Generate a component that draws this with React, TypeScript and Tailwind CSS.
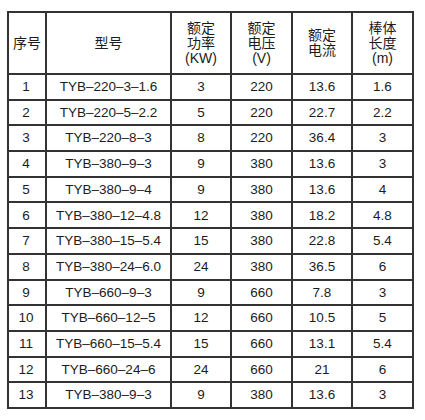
const rows = [
  ["1", "TYB–220–3–1.6", "3", "220", "13.6", "1.6"],
  ["2", "TYB–220–5–2.2", "5", "220", "22.7", "2.2"],
  ["3", "TYB–220–8–3", "8", "220", "36.4", "3"],
  ["4", "TYB–380–9–3", "9", "380", "13.6", "3"],
  ["5", "TYB–380–9–4", "9", "380", "13.6", "4"],
  ["6", "TYB–380–12–4.8", "12", "380", "18.2", "4.8"],
  ["7", "TYB–380–15–5.4", "15", "380", "22.8", "5.4"],
  ["8", "TYB–380–24–6.0", "24", "380", "36.5", "6"],
  ["9", "TYB–660–9–3", "9", "660", "7.8", "3"],
  ["10", "TYB–660–12–5", "12", "660", "10.5", "5"],
  ["11", "TYB–660–15–5.4", "15", "660", "13.1", "5.4"],
  ["12", "TYB–660–24–6", "24", "660", "21", "6"],
  ["13", "TYB–380–9–3", "9", "380", "13.6", "3"],
];

const headers = [
  ["序号"],
  ["型号"],
  ["额定", "功率", "(KW)"],
  ["额定", "电压", "(V)"],
  ["额定", "电流"],
  ["棒体", "长度", "(m)"],
];

export default function App() {
  return (
    <div className="w-[425px] h-[420px] bg-white pl-[7px] pt-[11px]">
      <table className="border-collapse w-[405px] table-fixed text-[13.5px] text-[#1c1c1c] font-['Liberation_Sans','Noto_Sans_CJK_SC',sans-serif]">
        <colgroup>
          <col className="w-[38px]" />
          <col className="w-[125px]" />
          <col className="w-[60px]" />
          <col className="w-[61px]" />
          <col className="w-[60px]" />
          <col className="w-[61px]" />
        </colgroup>
        <thead>
          <tr className="h-[62px]">
            {headers.map((lines, i) => (
              <th
                key={i}
                className="border-2 border-[#333] p-0 text-[14px] font-normal text-center align-middle leading-[15px]"
              >
                {lines.map((l, j) => (
                  <div key={j}>{l}</div>
                ))}
              </th>
            ))}
          </tr>
        </thead>
        <tbody>
          {rows.map((r) => (
            <tr key={r[0]} className="h-[25.7px]">
              {r.map((c, i) => (
                <td
                  key={i}
                  className={`border-2 border-[#333] p-0 align-middle leading-none text-center ${
                    i === 0 ? "pr-[2px]" : ""
                  }`}
                >
                  {c}
                </td>
              ))}
            </tr>
          ))}
        </tbody>
      </table>
    </div>
  );
}
